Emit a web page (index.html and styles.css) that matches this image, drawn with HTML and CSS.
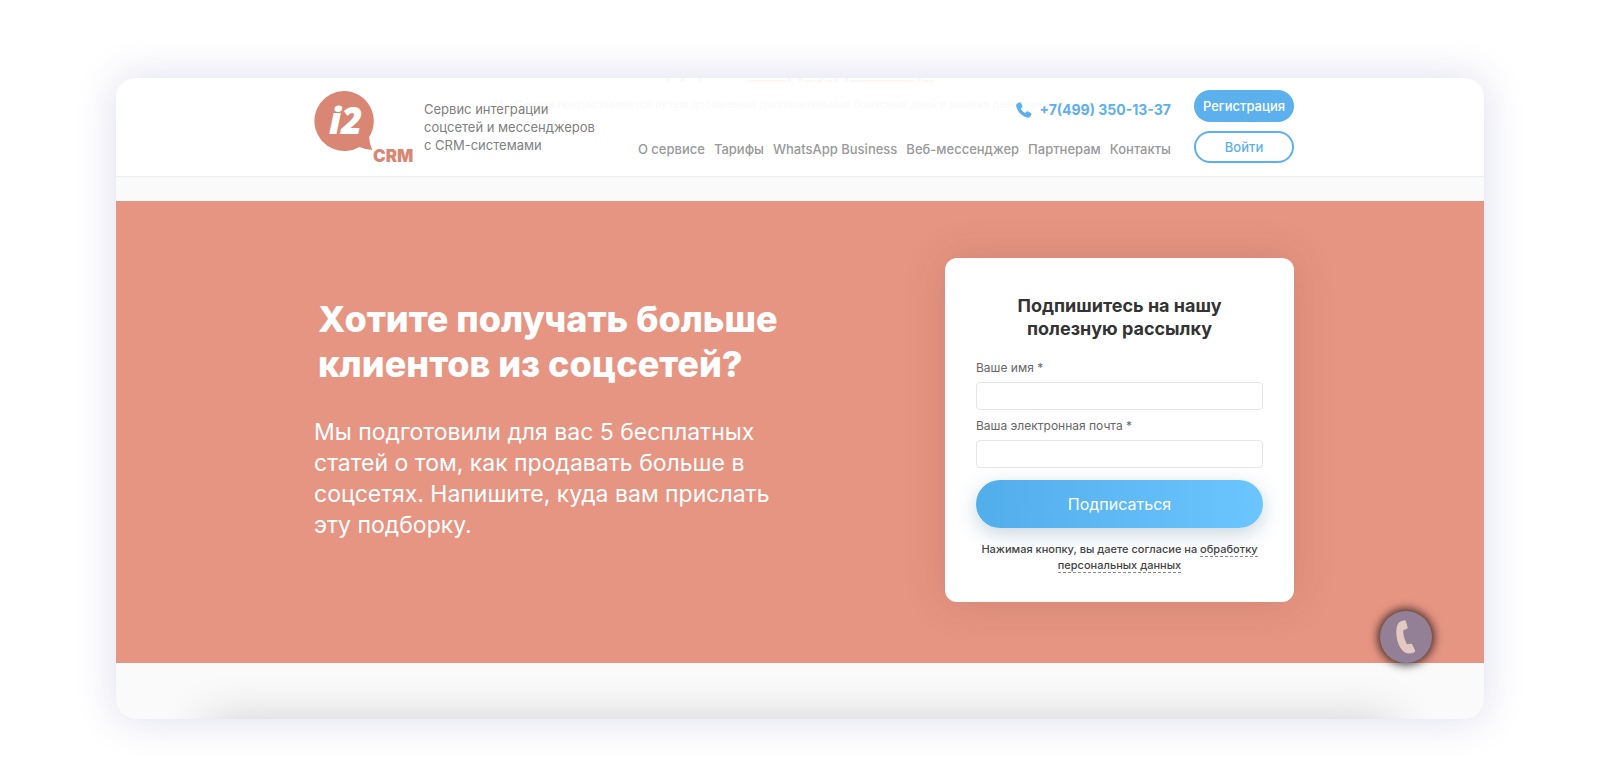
FILE: index.html
```
<!DOCTYPE html>
<html lang="ru">
<head>
  <meta charset="UTF-8">
  <meta name="viewport" content="width=device-width, initial-scale=1.0">
  <title>i2CRM</title>
  <link rel="stylesheet" href="styles.css">
</head>
<body>
  <div class="window">
    <header class="header">
      <div class="promo" aria-hidden="true">
        <p class="promo-title">Дарим <span>скидку до конца</span></p>
        <p class="promo-note">** - Скидка предоставляется путем добавления дополнительных бонусных дней в рамках действующего тарифа</p>
      </div>
      <div class="container header-row">
        <a class="logo" href="#" aria-label="i2CRM">
          <svg width="100" height="74" viewBox="0 0 100 74">
            <path d="M30 0a30 30 0 1 0 15.500 55.900q6 2.500 12.800 3.200-2.800-5.500-3.200-13A30 30 0 0 0 30 0z" fill="#d98774"/>
            <text class="logo-i2" x="15" y="43">i2</text>
            <text class="logo-crm" x="59" y="71">CRM</text>
          </svg>
        </a>
        <p class="tagline">Сервис интеграции<br>соцсетей и мессенджеров<br>с CRM-системами</p>
        <div class="header-main">
          <a class="phone" href="tel:+74993501337">
            <svg width="16" height="16" viewBox="0 0 16 16"><path d="M3.600.400 1.300 1.500C.300 2 0 3.200.300 4.500c1.300 5.400 5.600 9.700 10.900 11 1.500.400 2.700-.100 3.300-1.200l1-2.100c.200-.400.100-.800-.300-1L11.700 9.300c-.400-.200-.800-.100-1.100.200L9.300 11C7.300 10 5.700 8.400 4.800 6.400l1.400-1.200c.300-.300.400-.700.300-1.100L4.800.800C4.600.400 4.100.200 3.600.400z" fill="#5cb0ed"/></svg>
            +7(499) 350-13-37
          </a>
          <nav class="nav">
            <a href="#">О сервисе</a>
            <a href="#">Тарифы</a>
            <a href="#">WhatsApp Business</a>
            <a href="#">Веб-мессенджер</a>
            <a href="#">Партнерам</a>
            <a href="#">Контакты</a>
          </nav>
        </div>
        <div class="auth">
          <button class="btn btn-fill" type="button">Регистрация</button>
          <button class="btn btn-line" type="button">Войти</button>
        </div>
      </div>
    </header>

    <main class="subscribe">
      <div class="container subscribe-row">
        <div class="lead">
          <h1>Хотите получать больше<br>клиентов из соцсетей?</h1>
          <p>Мы подготовили для вас 5 бесплатных<br>статей о том, как продавать больше в<br>соцсетях. Напишите, куда вам прислать<br>эту подборку.</p>
        </div>
        <form class="card">
          <h2>Подпишитесь на нашу<br>полезную рассылку</h2>
          <label for="name">Ваше имя *</label>
          <input id="name" type="text">
          <label for="email">Ваша электронная почта *</label>
          <input id="email" type="email">
          <button class="submit" type="button">Подписаться</button>
          <p class="consent">Нажимая кнопку, вы даете согласие на <a href="#">обработку</a><br><a href="#">персональных данных</a></p>
        </form>
      </div>
    </main>

    <div class="next">
      <div class="next-card"></div>
    </div>

    <button class="callback" type="button" aria-label="Заказать звонок">
      <svg width="20" height="34" viewBox="0 0 20 34"><path d="M4.500 1.500 8 .300q1.200-.300 1.700.800L11.600 7q.400 1.400-.800 1.900L7.300 10.300q-.600 5.500 3.600 14l3.700-.500q1.200-.200 1.700.900l2.700 5.600q.500 1.300-.700 1.900-3.600 1.800-7.300 1C4.700 31.600.700 22 .400 14 .200 8 .800 3.500 4.500 1.500z" fill="#e3c9c1"/></svg>
    </button>
  </div>
</body>
</html>
```
FILE: styles.css
```
* {
  box-sizing: border-box;
}
body {
  margin: 0;
  padding: 78px 116px 57px;
  background: #fff;
  font-family: Inter, "Open Sans", sans-serif;
}
h1, h2, p {
  margin: 0;
}
a {
  color: inherit;
  text-decoration: none;
}
button {
  font-family: inherit;
  border: 0;
  cursor: pointer;
}
.window {
  position: relative;
  border-radius: 20px;
  background: #fafafa;
  box-shadow: 0 0 40px rgba(60, 60, 150, 0.18);
}
.container {
  max-width: 988px;
  margin: 0 auto;
  padding-left: 8px;
}

/* header */
.header {
  position: relative;
  margin-bottom: 24px;
  border-bottom: 1px solid #eee;
  border-radius: 20px 20px 0 0;
  background: #fff;
}
.header-row {
  position: relative;
  display: flex;
  align-items: flex-start;
  padding-top: 12px;
  padding-bottom: 11px;
}
.promo {
  position: absolute;
  inset: 0;
  overflow: hidden;
  text-align: center;
}
.promo-title {
  margin-top: -20px;
  color: #fafafa;
  font-size: 22px;
  font-weight: 700;
  line-height: 24px;
}
.promo-title span {
  color: #fdf6f4;
  text-decoration: underline;
}
.promo-note {
  margin-top: 14px;
  padding-left: 8px;
  color: #fafafa;
  font-size: 11px;
  font-weight: 500;
  line-height: 16px;
}
.logo {
  margin-top: 1px;
}
.logo svg {
  display: block;
}
.logo-i2 {
  fill: #fff;
  font: italic 800 37px "Open Sans", sans-serif;
}
.logo-crm {
  fill: #d98774;
  font: 900 17px Inter, sans-serif;
}
.tagline {
  margin: 10px 0 0 10px;
  color: #808080;
  font-size: 13px;
  line-height: 18px;
}
.header-main {
  display: flex;
  flex-direction: column;
  align-items: flex-end;
  gap: 20px;
  margin: 10px 23px 0 auto;
}
.phone {
  display: flex;
  align-items: center;
  gap: 8px;
  color: #5cb0ed;
  font-size: 14px;
  font-weight: 700;
  line-height: 20px;
}
.nav {
  display: flex;
  gap: 9px;
  color: #999;
  font-size: 13px;
  font-weight: 500;
  line-height: 18px;
  white-space: nowrap;
}
.auth {
  display: flex;
  flex-direction: column;
  gap: 9px;
}
.btn {
  width: 100px;
  height: 32px;
  padding: 0;
  border-radius: 16px;
  font-size: 13px;
  font-weight: 500;
}
.btn-fill {
  background: #5cb0ed;
  color: #fff;
}
.btn-line {
  border: 2px solid #5cb0ed;
  background: #fff;
  color: #5cb0ed;
}

/* subscribe */
.subscribe {
  padding: 57px 0 61px;
  background: #e69583;
}
.subscribe-row {
  display: flex;
  align-items: flex-start;
  justify-content: space-between;
}
.lead {
  padding-top: 39px;
  color: #fff;
}
.lead h1 {
  padding-left: 4px;
  font-size: 36px;
  font-weight: 800;
  line-height: 45px;
}
.lead p {
  margin-top: 30px;
  font-size: 23px;
  line-height: 31px;
}
.card {
  display: flex;
  flex-direction: column;
  width: 349px;
  padding: 36px 31px 29px;
  border-radius: 12px;
  background: #fff;
  box-shadow: 0 0 40px rgba(120, 50, 40, 0.18);
}
.card h2 {
  margin-bottom: 18px;
  color: #333;
  font-size: 18px;
  font-weight: 700;
  line-height: 23px;
  text-align: center;
}
.card label {
  color: #666;
  font-size: 12px;
  line-height: 20px;
}
.card input {
  width: 100%;
  height: 28px;
  margin: 4px 0 6px;
  padding: 0 8px;
  border: 1px solid #e6e6e6;
  border-radius: 4px;
}
.submit {
  height: 48px;
  margin: 6px 0 13px;
  border-radius: 24px;
  background: linear-gradient(90deg, #52adeb, #6bc5fe);
  box-shadow: 0 6px 20px rgba(40, 90, 130, 0.25);
  color: #fff;
  font-size: 16px;
}
.consent {
  color: #444;
  font-size: 11px;
  font-weight: 500;
  line-height: 16px;
  text-align: center;
  white-space: nowrap;
}
.consent a {
  border-bottom: 1px dashed #888;
}

/* top edge of the next block */
.next {
  height: 56px;
  overflow: hidden;
  border-radius: 0 0 20px 20px;
}
.next-card {
  height: 60px;
  margin: 60px 90px 0;
  box-shadow: 0 0 50px rgba(0, 0, 0, 0.2);
}

.callback {
  position: absolute;
  right: 52px;
  bottom: 56px;
  display: flex;
  align-items: center;
  justify-content: center;
  width: 52px;
  height: 52px;
  padding: 0;
  border-radius: 50%;
  background: #938096;
  box-shadow: 0 0 10px 2px rgba(0, 0, 0, 0.75);
}
```
